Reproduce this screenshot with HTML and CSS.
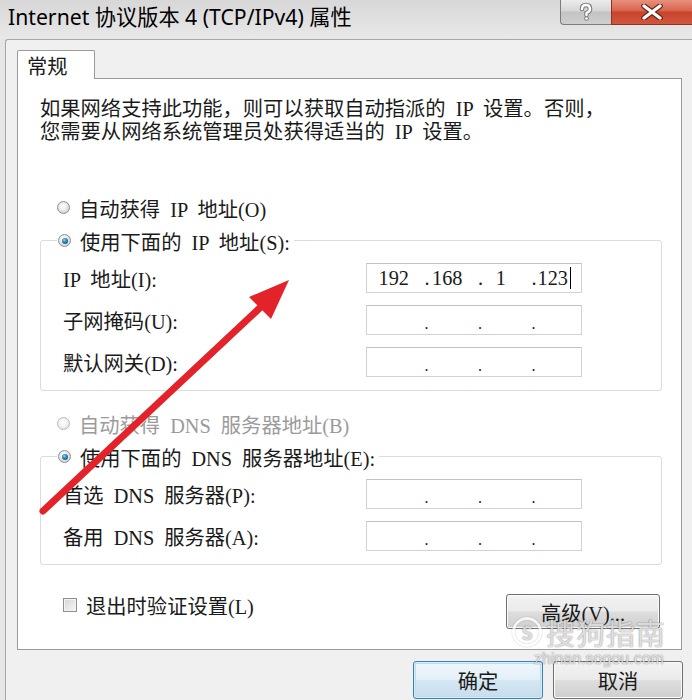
FILE: index.html
```html
<!DOCTYPE html>
<html lang="zh-CN">
<head>
<meta charset="utf-8">
<title>Internet 协议版本 4 (TCP/IPv4) 属性</title>
<link rel="stylesheet" href="styles.css">
</head>
<body>
<div class="window">
  <div class="titlebar">
    <span class="title">Internet 协议版本 4 (TCP/IPv4) 属性</span>
    <div class="caption">
      <div class="cap-btn help">
        <svg width="18" height="20" viewBox="0 0 18 20">
          <path d="M5 7 Q5 3 9 3 Q13 3 13 7 Q13 9.5 9.5 11 L9.5 13" fill="none" stroke="#7d7d7d" stroke-width="4.6" stroke-linecap="round"/>
          <circle cx="9.5" cy="16.5" r="2.3" fill="#7d7d7d"/>
          <path d="M5 7 Q5 3 9 3 Q13 3 13 7 Q13 9.5 9.5 11 L9.5 13" fill="none" stroke="#fff" stroke-width="2.4" stroke-linecap="round"/>
          <circle cx="9.5" cy="16.5" r="1.3" fill="#fff"/>
        </svg>
      </div>
      <div class="cap-btn close">
        <svg width="22" height="16" viewBox="0 0 22 16">
          <path d="M3 2 L19 14 M19 2 L3 14" stroke="#6b2216" stroke-width="5.5" stroke-linecap="round"/>
          <path d="M3 2 L19 14 M19 2 L3 14" stroke="#fff" stroke-width="3.2" stroke-linecap="round"/>
        </svg>
      </div>
    </div>
  </div>
  <div class="client">
    <div class="tabs"><div class="tab">常规</div></div>
    <div class="panel">
      <p class="desc">如果网络支持此功能，则可以获取自动指派的 IP 设置。否则，<br>您需要从网络系统管理员处获得适当的 IP 设置。</p>

      <div class="radio-row first">
        <span class="radio"></span><span>自动获得 IP 地址(O)</span>
      </div>
      <fieldset class="group">
        <legend class="radio-row"><span class="radio checked"><span class="dot"></span></span><span>使用下面的 IP 地址(S):</span></legend>
        <div class="row"><span>IP 地址(I):</span>
          <div class="ip"><span class="seg"><span class="num">192</span></span><span class="seg"><i>.</i><span class="num">168</span></span><span class="seg"><i>.</i><span class="num">1</span></span><span class="seg"><i>.</i><span class="num">123<b class="caret"></b></span></span></div>
        </div>
        <div class="row"><span>子网掩码(U):</span>
          <div class="ip empty"><span class="seg"></span><span class="seg"><i>.</i></span><span class="seg"><i>.</i></span><span class="seg"><i>.</i></span></div>
        </div>
        <div class="row"><span>默认网关(D):</span>
          <div class="ip empty"><span class="seg"></span><span class="seg"><i>.</i></span><span class="seg"><i>.</i></span><span class="seg"><i>.</i></span></div>
        </div>
      </fieldset>

      <div class="radio-row disabled second">
        <span class="radio"></span><span>自动获得 DNS 服务器地址(B)</span>
      </div>
      <fieldset class="group">
        <legend class="radio-row"><span class="radio checked"><span class="dot"></span></span><span>使用下面的 DNS 服务器地址(E):</span></legend>
        <div class="row"><span>首选 DNS 服务器(P):</span>
          <div class="ip empty"><span class="seg"></span><span class="seg"><i>.</i></span><span class="seg"><i>.</i></span><span class="seg"><i>.</i></span></div>
        </div>
        <div class="row"><span>备用 DNS 服务器(A):</span>
          <div class="ip empty"><span class="seg"></span><span class="seg"><i>.</i></span><span class="seg"><i>.</i></span><span class="seg"><i>.</i></span></div>
        </div>
      </fieldset>

      <div class="bottom">
        <label class="check"><span class="box"></span><span>退出时验证设置(L)</span></label>
        <button class="btn adv">高级(V)...</button>
      </div>
    </div>
    <div class="actions">
      <button class="btn default">确定</button>
      <button class="btn">取消</button>
    </div>
  </div>
</div>

<svg class="arrow" width="692" height="700" viewBox="0 0 692 700">
  <line x1="43" y1="511" x2="264" y2="304" stroke="#e3222a" stroke-width="7" stroke-linecap="round"/>
  <polygon points="289,280 249,297 271,319" fill="#e3222a"/>
</svg>

<div class="watermark">
  <div class="wm-top"><span class="wm-logo">S</span><span class="wm-name">搜狗指南</span></div>
  <div class="wm-url">zhinan.sogou.com</div>
</div>
</body>
</html>
```
FILE: styles.css
```css
html, body {
  margin: 0;
  padding: 0;
}
body {
  width: 692px;
  height: 700px;
  overflow: hidden;
  position: relative;
  background: #e6e6e6;
  font-family: "Liberation Serif", "Noto Sans CJK SC", serif;
  font-size: 20.3px;
  word-spacing: 5px;
  color: #1a1a1a;
}
.window {
  width: 692px;
  height: 700px;
}
.titlebar {
  height: 39px;
  display: flex;
  align-items: flex-start;
  background: linear-gradient(#d7d7d7, #e2e2e2 65%, #e8e8e8);
}
.title {
  font-family: "Noto Sans", "Noto Sans CJK SC", sans-serif;
  font-size: 21.2px;
  line-height: 26px;
  padding: 4px 0 0 8px;
  word-spacing: 0;
  color: #000;
  white-space: nowrap;
}
.caption {
  margin-left: auto;
  display: flex;
}
.cap-btn {
  height: 25px;
  display: flex;
  align-items: center;
  justify-content: center;
  box-sizing: border-box;
}
.help {
  width: 51px;
  border: 1px solid #7c7c7c;
  border-top: none;
  border-right: none;
  border-bottom-left-radius: 4px;
  background: linear-gradient(#ececec, #d6d6d6 45%, #c3c3c3 50%, #cfcfcf);
}
.close {
  width: 81px;
  border-bottom: 1px solid #8a3424;
  border-left: 1px solid #8a3424;
  background: linear-gradient(#e8907d, #d6654c 45%, #c7442b 50%, #d2573d);
}
.client {
  margin-left: 5px;
  height: 661px;
  box-sizing: border-box;
  border-left: 1px solid #a6a6a6;
  border-top: 1px solid #a6a6a6;
  border-top-left-radius: 3px;
  background: #f0f0f0;
  padding: 10px 0 0 11px;
}
.tabs {
  height: 28px;
  display: flex;
}
.tab {
  position: relative;
  z-index: 1;
  width: 78px;
  height: 29px;
  box-sizing: border-box;
  border: 1px solid #9a9a9a;
  border-bottom: none;
  border-radius: 2px 2px 0 0;
  background: #fff;
  padding-left: 9px;
  line-height: 29px;
  font-family: "Noto Sans CJK SC", sans-serif;
}
.panel {
  width: 665px;
  box-sizing: border-box;
  border: 1px solid #9a9a9a;
  background: #fff;
  padding: 0 0 20px 22px;
}
.desc {
  margin: 19px 0 0;
  line-height: 23px;
  white-space: nowrap;
}
.radio-row {
  display: flex;
  align-items: center;
  height: 33px;
  gap: 9px;
  white-space: nowrap;
}
.radio-row.first {
  margin-top: 47px;
  padding-left: 17px;
}
.radio-row.second {
  margin-top: 16px;
  padding-left: 17px;
}
.radio-row.disabled {
  color: #9b9b9b;
}
.radio {
  width: 13px;
  height: 13px;
  box-sizing: border-box;
  border-radius: 50%;
  border: 1px solid #8e8f8f;
  background: radial-gradient(circle at 45% 40%, #ffffff 0, #f0f0f0 35%, #cfcfcf 80%);
  display: flex;
  align-items: center;
  justify-content: center;
  flex: none;
}
.disabled .radio {
  border-color: #b9b9b9;
  background: radial-gradient(circle at 45% 40%, #ffffff 0, #f4f4f4 40%, #e0e0e0 85%);
}
.dot {
  width: 6px;
  height: 6px;
  border-radius: 50%;
  background: radial-gradient(circle at 40% 35%, #8fd3f5 0, #2a86bd 40%, #0c4469 100%);
}
.group {
  width: 622px;
  box-sizing: border-box;
  margin: 0;
  border: 1px solid #dcdcdc;
  border-radius: 3px;
  padding: 0 0 7px 22px;
}
.group legend {
  margin-left: -6px;
  padding: 0 4px 0 1px;
}
.row {
  display: grid;
  grid-template-columns: 303px 216px;
  align-items: center;
  height: 42px;
  white-space: nowrap;
}
.ip {
  height: 30px;
  box-sizing: border-box;
  border: 1px solid #d3d3d3;
  border-top-color: #c2c2c2;
  display: flex;
  align-items: center;
  background: #fff;
}
.seg {
  flex: 1;
  display: grid;
  align-items: center;
  line-height: 28px;
  height: 28px;
}
.seg i {
  grid-area: 1 / 1;
  justify-self: start;
  font-style: normal;
  padding-left: 4px;
}
.seg .num {
  grid-area: 1 / 1;
  justify-self: center;
  display: flex;
  align-items: center;
}
.empty .seg i {
  font-size: 16px;
  padding-top: 4px;
}
.caret {
  display: inline-block;
  width: 1px;
  height: 22px;
  background: #000;
  margin-left: 2px;
}
.bottom {
  width: 620px;
  display: flex;
  align-items: flex-start;
  margin-top: 29px;
}
.check {
  display: flex;
  align-items: center;
  gap: 9px;
  height: 22px;
  margin-left: 23px;
  white-space: nowrap;
}
.box {
  width: 14px;
  height: 14px;
  box-sizing: border-box;
  border: 1px solid #8e8f8f;
  background: linear-gradient(135deg, #d6d6d6, #f7f7f7);
  box-shadow: inset 0 0 0 1px #f3f3f3;
}
.btn {
  font: inherit;
  color: #1a1a1a;
  padding: 0;
  box-sizing: border-box;
  border: 1px solid #707070;
  border-radius: 3px;
  background: linear-gradient(#f2f2f2, #ebebeb 48%, #dddddd 52%, #cfcfcf);
  box-shadow: inset 0 0 0 1px #fbfbfb;
}
.adv {
  margin-left: auto;
  width: 154px;
  height: 35px;
}
.actions {
  width: 666px;
  display: flex;
  justify-content: flex-end;
  gap: 10px;
  margin-top: 11px;
}
.actions .btn {
  width: 130px;
  height: 38px;
  font-family: "Noto Sans CJK SC", sans-serif;
}
.btn.default {
  border-color: #3c7fb1;
  box-shadow: inset 0 0 0 1px #d6eefc, inset 0 0 0 2px #b9def5;
  background: linear-gradient(#eef6fb, #e4f0f8 48%, #d3e6f3 52%, #c8ddec);
}
.arrow {
  position: absolute;
  left: 0;
  top: 0;
  pointer-events: none;
}
.watermark {
  position: absolute;
  left: 512px;
  top: 614px;
  pointer-events: none;
  word-spacing: 0;
  color: rgba(255, 255, 255, 0.75);
  font-family: "Noto Sans CJK SC", sans-serif;
  text-shadow: 0 0 1px rgba(0, 0, 0, 0.45), 0 0 2px rgba(0, 0, 0, 0.2);
}
.wm-top {
  display: flex;
  align-items: center;
  gap: 4px;
}
.wm-logo {
  width: 30px;
  height: 30px;
  border-radius: 50%;
  border: 3px solid rgba(255, 255, 255, 0.75);
  box-sizing: border-box;
  box-shadow: 0 0 1px rgba(0, 0, 0, 0.45), inset 0 0 1px rgba(0, 0, 0, 0.45);
  font-size: 18px;
  font-weight: bold;
  line-height: 24px;
  text-align: center;
}
.wm-name {
  font-size: 29px;
  line-height: 36px;
  letter-spacing: 1px;
}
.wm-url {
  font-family: "Liberation Sans", sans-serif;
  font-size: 16px;
  line-height: 18px;
  margin-left: 22px;
}
```
